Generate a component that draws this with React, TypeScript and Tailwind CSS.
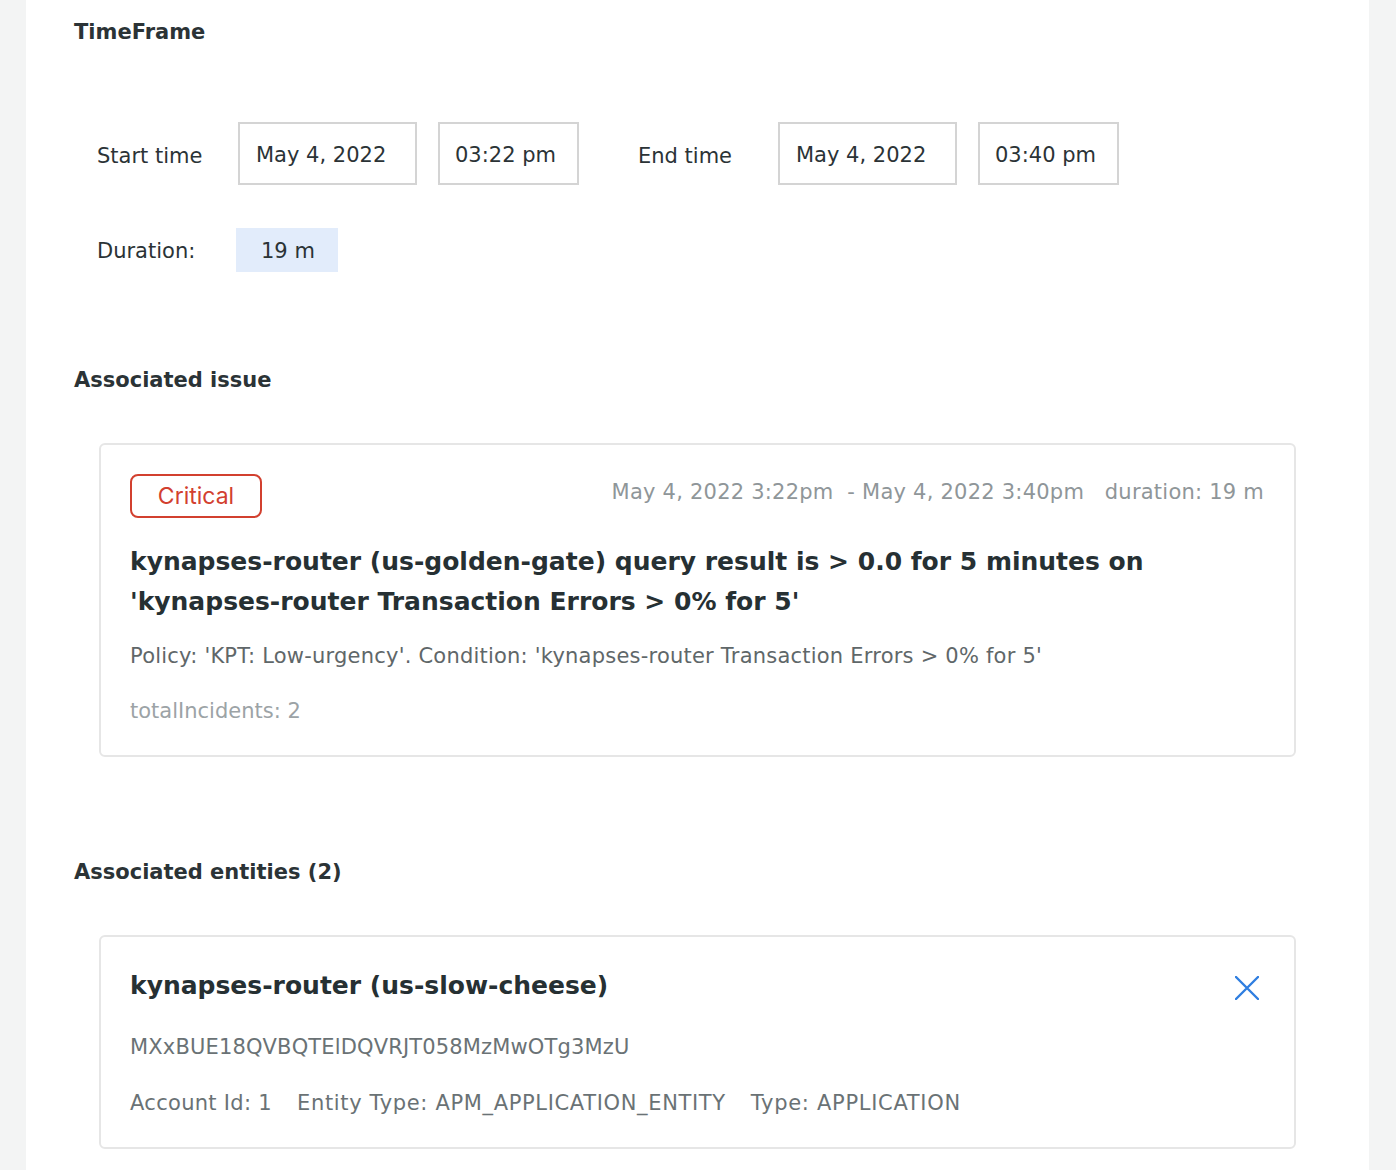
import React from "react";

const F = { fontFamily: '"DejaVu Sans", Verdana, sans-serif' };

export default function App() {
  return (
    <div className="min-h-screen bg-[#f3f4f4] flex" style={F}>
      <div className="ml-[26px] w-[1343px] min-h-[1170px] bg-white pl-[48px] pr-[73px] text-[#2b3336]">
        <h2 className="mt-[17px] text-[21px] leading-[30px] font-bold">TimeFrame</h2>

        <div className="mt-[75px] pl-[23px] flex items-center text-[21px]">
          <div className="w-[141px] pt-[6px]">Start time</div>
          <div className="w-[179px] pl-[16px] pt-[4px] h-[63px] border-2 border-[#d4d4d4] flex items-center">May 4, 2022</div>
          <div className="ml-[21px] w-[141px] pl-[15px] pt-[4px] h-[63px] border-2 border-[#d4d4d4] flex items-center">03:22 pm</div>
          <div className="ml-[59px] w-[140px] pt-[6px]">End time</div>
          <div className="w-[179px] pl-[16px] pt-[4px] h-[63px] border-2 border-[#d4d4d4] flex items-center">May 4, 2022</div>
          <div className="ml-[21px] w-[141px] pl-[15px] pt-[4px] h-[63px] border-2 border-[#d4d4d4] flex items-center">03:40 pm</div>
        </div>

        <div className="mt-[43px] pl-[23px] flex items-center text-[21px]">
          <div className="w-[139px] pt-[3px]">Duration:</div>
          <div className="w-[102px] h-[44px] pl-[25px] pt-[4px] bg-[#e2ecfb] flex items-center">19 m</div>
        </div>

        <h2 className="mt-[93px] text-[21px] leading-[30px] font-bold">Associated issue</h2>

        <div className="mt-[48px] ml-[25px] w-[1197px] border-2 border-[#e6e6e6] rounded-[6px] pt-[29px] pl-[29px] pr-[30px] pb-[29px]">
          <div className="flex items-start justify-between">
            <div
              className="w-[132px] h-[44px] border-2 border-[#d2402f] rounded-[8px] flex items-center justify-center text-[23px] text-[#d2402f]"
              style={{ fontFamily: 'Inter, "Liberation Sans", Arial, sans-serif' }}
            >
              Critical
            </div>
            <div className="mt-[3px] text-[21px] leading-[30px] text-[#8f9699] whitespace-pre tracking-[0.23px]">
              {"May 4, 2022 3:22pm  - May 4, 2022 3:40pm   duration: 19 m"}
            </div>
          </div>
          <div className="mt-[24px] text-[25px] leading-[40px] font-bold text-[#263033]">
            kynapses-router (us-golden-gate) query result is &gt; 0.0 for 5 minutes on
            <br />
            'kynapses-router Transaction Errors &gt; 0% for 5'
          </div>
          <div className="mt-[19px] text-[21px] leading-[30px] text-[#5f6769] tracking-[0.22px]">
            Policy: 'KPT: Low-urgency'. Condition: 'kynapses-router Transaction Errors &gt; 0% for 5'
          </div>
          <div className="mt-[25px] text-[21px] leading-[30px] text-[#9ca3a6]">totalIncidents: 2</div>
        </div>

        <h2 className="mt-[100px] text-[21px] leading-[30px] font-bold">Associated entities (2)</h2>

        <div className="mt-[48px] ml-[25px] w-[1197px] border-2 border-[#e6e6e6] rounded-[6px] pt-[31px] pl-[29px] pr-[35px] pb-[29px]">
          <div className="flex items-start justify-between">
            <div className="text-[25px] leading-[36px] font-bold text-[#263033]">kynapses-router (us-slow-cheese)</div>
            <svg width="24" height="24" viewBox="0 0 24 24" className="mt-[8px]">
              <path d="M1 1 L23 23 M23 1 L1 23" stroke="#2f7ee0" strokeWidth="2.4" strokeLinecap="round" fill="none" />
            </svg>
          </div>
          <div className="mt-[28px] text-[21px] leading-[30px] text-[#6a7275] tracking-[0.15px]">MXxBUE18QVBQTElDQVRJT058MzMwOTg3MzU</div>
          <div className="mt-[26px] text-[21px] leading-[30px] text-[#6a7275] flex gap-[25px]">
            <span className="tracking-[0.3px]">Account Id: 1</span>
            <span className="tracking-[0.65px]">Entity Type: APM_APPLICATION_ENTITY</span>
            <span className="tracking-[0.7px]">Type: APPLICATION</span>
          </div>
        </div>
      </div>
      <div className="flex-1" />
    </div>
  );
}
